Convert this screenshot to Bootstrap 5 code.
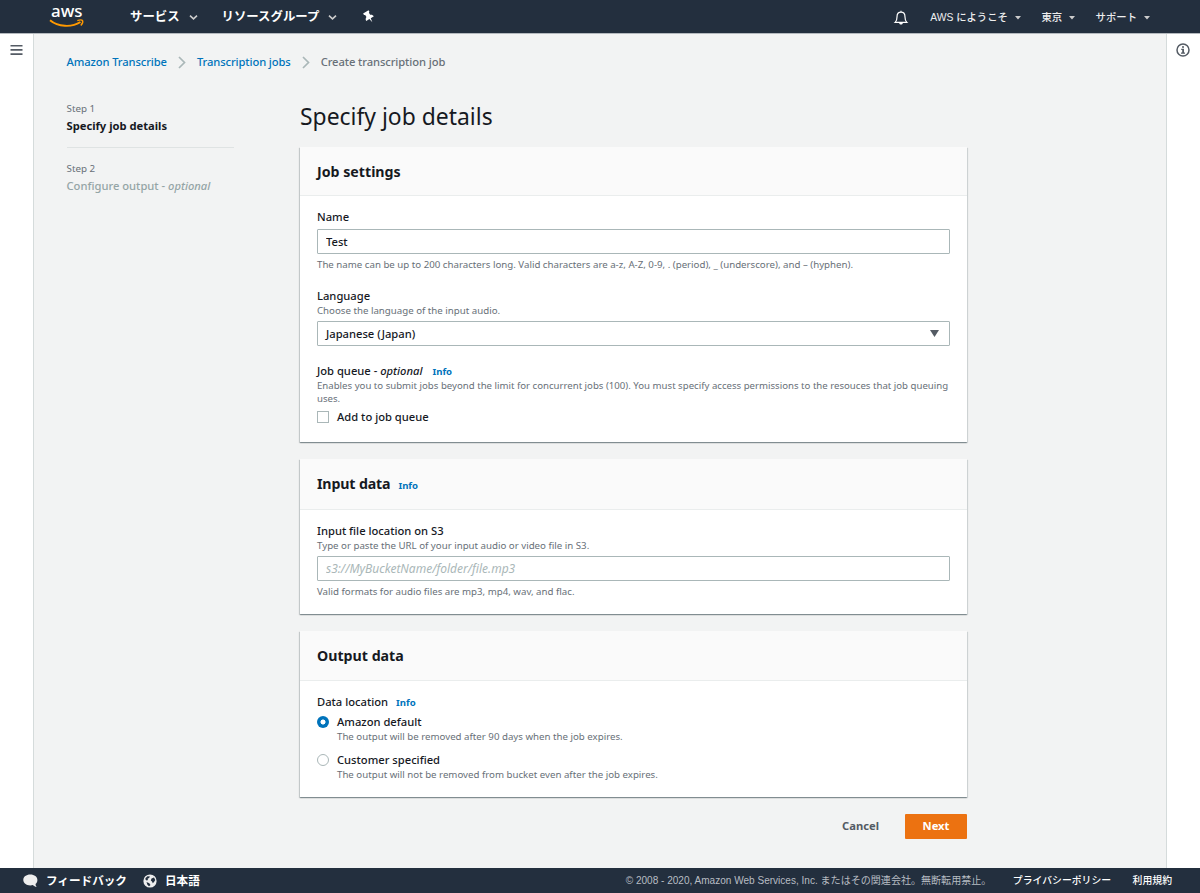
<!DOCTYPE html>
<html lang="ja">
<head>
<meta charset="utf-8">
<title>Amazon Transcribe</title>
<meta name="viewport" content="width=device-width, initial-scale=1">
<link href="https://cdn.jsdelivr.net/npm/bootstrap@5.3.0/dist/css/bootstrap.min.css" rel="stylesheet">
<style>
body{font-family:"Noto Sans","Noto Sans CJK JP",sans-serif;font-size:11.2px;font-weight:500;line-height:16px;color:#16191f;background:#f2f3f3;height:893px;overflow:hidden}
a{text-decoration:none;color:#0073bb}
svg{display:block;flex:none;overflow:visible}
.topbar{height:34px;flex:none;background:#232f3e;border-bottom:1px solid #b4b9be;font-family:"Liberation Sans","Noto Sans CJK JP",sans-serif;padding:1px 0 0 49px}
.topbar a,.footbar a{color:#fff}
.menu-main{font-size:12.4px;font-weight:700}
.menu-main a:first-child{margin-left:45px}
.menu-side{font-size:10.35px;padding-top:1px}
.menu-side a,.topbar .menu-side a{color:#eee}
.drop{margin:0 20.5px 0 7px}
.drop:last-child{margin-right:50px}
.rail{width:34px;flex:none;background:#fff}
.rail-start{border-right:1px solid #d5dbdb}
.rail-end{border-left:1px solid #d5dbdb}
.crumbs{height:16px;margin:20px 0 0 32.5px;color:#687078}
.crumbs a,.crumbs span{letter-spacing:-.1px}
.crumbs span{letter-spacing:-.09px}
.crumbs svg{margin:0 11px}
.steps{width:167px;margin:31px 0 0 32.5px}
.step-no{font-size:9.8px;font-weight:400;color:#687078}
.step-name{padding-top:1px}
.step-line{height:1px;background:#dfe3e3;margin:13px 0 13px}
.pending{color:#95a5a6}
.form-col{width:667px;margin-left:66.5px}
h1{font-size:22.9px;line-height:30px;margin:32px 0 15px;font-weight:400}
.panel{background:#fff;box-shadow:0 1px 1px 0 rgba(0,28,36,.3),1px 1px 1px 0 rgba(0,28,36,.1),-1px 1px 1px 0 rgba(0,28,36,.15);margin-bottom:17px}
.panel-head{background:#fafafa;border-bottom:1px solid #eaeded;padding:1px 17px 0;height:49px}
.head-input{height:51px}
.head-output{height:50px}
.panel-head h2{font-size:14.2px;font-weight:700;margin:0;line-height:20px}
.head-input h2{letter-spacing:-.15px}
.head-input .info{padding-top:3px}
.panel-body{padding:13px 17px 16px}
.panel-first .panel-body{padding-bottom:16.5px}
.panel-last .panel-body{padding-bottom:16px}
.group{margin-top:17px}
.hint{font-size:9.7px;font-weight:400;line-height:13px;color:#687078}
.hint-queue{line-height:12.5px;font-size:9.65px;white-space:nowrap}
.info{font-size:9.6px;font-weight:700;margin-left:8px}
.info-queue{margin-left:10px}
.field{display:block;width:100%;height:25px;border:1px solid #aab7b8;border-radius:1px;padding:0 8px;font:inherit;line-height:23px;color:#16191f;background:#fff;outline:0}
.field::placeholder{color:#aab7b8;font-style:italic;font-size:12px;font-weight:400;opacity:1}
.tick{width:12px;height:12px;border:1px solid #aab7b8;flex:none;background:#fff}
.dot-off{border-radius:50%}
.dot-on{border:0;border-radius:50%;background:radial-gradient(circle,#fff 0 2.1px,#0073bb 2.900px)}
.choice{gap:8px;height:16px}
.choice-first{margin-top:3px}
.choice-next{margin-top:9px}
.sub{margin-left:20px}
.cancel{color:#545b64;margin-right:26px}
.cta{background:#ec7211;color:#fff;font-weight:700;width:62px;height:25px;border-radius:1px}
.cta:hover{color:#fff}
.footbar{height:25px;flex:none;background:#232f3e;padding:0 28px 0 23px;font-family:"Liberation Sans","Noto Sans CJK JP",sans-serif}
.foot-start{font-size:11.6px;font-weight:700}
.foot-end{font-size:9.85px;gap:21.5px}
.copy{color:#b8bdc3;font-size:10.05px;font-weight:400}
</style>
</head>
<body class="d-flex flex-column">
<header class="topbar d-flex align-items-center">
  <svg width="36" height="24" viewBox="0 0 36 24"><text x="2" y="12.200" font-family="Noto Sans" font-size="16" font-weight="500" fill="#fff" textLength="31.500" lengthAdjust="spacingAndGlyphs">aws</text><path d="M1 15.200C9 21.900 22.500 22.800 31.500 17" fill="none" stroke="#f90" stroke-width="1.900"/><path d="M28.300 15.700c2-.8 4.500-1 5.200-.2.500 1-.2 3.400-1.700 5" fill="none" stroke="#f90" stroke-width="1.400"/></svg>
  <nav class="menu-main d-flex align-items-center">
    <a href="#">サービス</a>
    <svg style="margin:0 24px 0 9px" width="9" height="7" viewBox="0 0 9 7"><path d="M1 1.700 4.500 4.900 8 1.700" fill="none" stroke="#ccc" stroke-width="1.600"/></svg>
    <a href="#">リソースグループ</a>
    <svg style="margin-left:9px" width="9" height="7" viewBox="0 0 9 7"><path d="M1 1.700 4.500 4.900 8 1.700" fill="none" stroke="#ccc" stroke-width="1.600"/></svg>
    <svg style="margin-left:26px" width="12" height="12" viewBox="0 0 12 12"><path transform="rotate(-32 6 6)" d="M2.800 0H9.200V1.700L8.200 2.300V4.700C9.700 5.400 10.500 6.400 10.500 8H6.800L6 12.300 5.200 8H1.500C1.500 6.400 2.300 5.400 3.800 4.700V2.300L2.800 1.700Z" fill="#fff"/></svg>
  </nav>
  <nav class="menu-side d-flex align-items-center ms-auto">
    <svg width="14" height="16" viewBox="0 0 14 16"><path d="M1.200 12.400C3 10.800 3 9.300 3 7c0-3 1.500-4.800 4-4.800S11 4 11 7c0 2.300 0 3.800 1.800 5.400ZM7 2.200V.8" fill="none" stroke="#fff" stroke-width="1.200"/><path d="M5.200 13h3.600c-.2 2-3.400 2-3.600 0Z" fill="#fff"/></svg>
    <a href="#" style="margin-left:22px">AWS にようこそ</a>
    <svg class="drop" width="6" height="4"><path d="M0 0H6L3 3.500Z" fill="#ccc"/></svg>
    <a href="#">東京</a>
    <svg class="drop" width="6" height="4"><path d="M0 0H6L3 3.500Z" fill="#ccc"/></svg>
    <a href="#">サポート</a>
    <svg class="drop" width="6" height="4"><path d="M0 0H6L3 3.500Z" fill="#ccc"/></svg>
  </nav>
</header>
<div class="d-flex flex-grow-1">
  <aside class="rail rail-start"><svg style="margin:10px 0 0 10px" width="13" height="12" viewBox="0 0 13 12"><path d="M.5 1.700H12.500M.5 5.900H12.500M.5 10.100H12.500" stroke="#545b64" stroke-width="1.600"/></svg></aside>
  <main class="flex-grow-1">
    <nav class="crumbs d-flex align-items-center">
      <a href="#">Amazon Transcribe</a>
      <svg width="8" height="13" viewBox="0 0 8 13"><path d="M1 1 6.500 6.500 1 12" fill="none" stroke="#aab7b8" stroke-width="1.700"/></svg>
      <a href="#">Transcription jobs</a>
      <svg width="8" height="13" viewBox="0 0 8 13"><path d="M1 1 6.500 6.500 1 12" fill="none" stroke="#aab7b8" stroke-width="1.700"/></svg>
      <span>Create transcription job</span>
    </nav>
    <div class="d-flex align-items-start">
      <aside class="steps">
        <div class="step-no">Step 1</div>
        <div class="step-name fw-bold">Specify job details</div>
        <div class="step-line"></div>
        <div class="step-no">Step 2</div>
        <div class="step-name pending">Configure output - <i>optional</i></div>
      </aside>
      <section class="form-col">
        <h1>Specify job details</h1>
        <div class="panel panel-first">
          <div class="panel-head d-flex align-items-center"><h2>Job settings</h2></div>
          <div class="panel-body">
            <label class="d-block" for="jobName">Name</label>
            <input id="jobName" class="field mt-1" value="Test">
            <div class="hint mt-1">The name can be up to 200 characters long. Valid characters are a-z, A-Z, 0-9, . (period), _ (underscore), and – (hyphen).</div>
            <div class="group">Language</div>
            <div class="hint">Choose the language of the input audio.</div>
            <div class="field mt-1 d-flex align-items-center justify-content-between"><span>Japanese (Japan)</span><svg style="margin-right:2px" width="9" height="7"><path d="M0 0H9L4.500 7Z" fill="#545b64"/></svg></div>
            <div class="group">Job queue - <i>optional</i><a class="info info-queue" href="#">Info</a></div>
            <div class="hint hint-queue">Enables you to submit jobs beyond the limit for concurrent jobs (100). You must specify access permissions to the resouces that job queuing<br>uses.</div>
            <div class="choice d-flex align-items-center mt-1"><span class="tick"></span><span>Add to job queue</span></div>
          </div>
        </div>
        <div class="panel">
          <div class="panel-head head-input d-flex align-items-center"><h2>Input data</h2><a class="info" href="#">Info</a></div>
          <div class="panel-body">
            <label class="d-block" for="s3">Input file location on S3</label>
            <div class="hint">Type or paste the URL of your input audio or video file in S3.</div>
            <input id="s3" class="field mt-1" placeholder="s3://MyBucketName/folder/file.mp3">
            <div class="hint mt-1">Valid formats for audio files are mp3, mp4, wav, and flac.</div>
          </div>
        </div>
        <div class="panel panel-last">
          <div class="panel-head head-output d-flex align-items-center"><h2>Output data</h2></div>
          <div class="panel-body">
            <div>Data location<a class="info" href="#">Info</a></div>
            <div class="choice choice-first d-flex align-items-center"><span class="tick dot-on"></span><span>Amazon default</span></div>
            <div class="hint sub">The output will be removed after 90 days when the job expires.</div>
            <div class="choice choice-next d-flex align-items-center"><span class="tick dot-off"></span><span>Customer specified</span></div>
            <div class="hint sub">The output will not be removed from bucket even after the job expires.</div>
          </div>
        </div>
        <div class="d-flex justify-content-end align-items-center">
          <a class="cancel fw-bold" href="#">Cancel</a>
          <a class="cta d-flex align-items-center justify-content-center" href="#">Next</a>
        </div>
      </section>
    </div>
  </main>
  <aside class="rail rail-end"><svg style="margin:9px 0 0 9px" width="14" height="14" viewBox="0 0 14 14"><circle cx="7" cy="7" r="6" fill="none" stroke="#545b64" stroke-width="1.500"/><path d="M6 3.200h2v1.600H6ZM5.200 5.800H8v3.700h1v1.200H5V9.500h1.200V7h-1Z" fill="#545b64"/></svg></aside>
</div>
<footer class="footbar d-flex align-items-center">
  <div class="foot-start d-flex align-items-center">
    <svg width="15" height="14" viewBox="0 0 15 14"><path d="M7.300.6C3.200.6.300 3 .3 6s2.900 5.400 7 5.400c1 0 1.800-.1 2.600-.4 1 1.200 2.300 1.800 3.700 1.900-.7-.9-1.100-1.800-1.100-3C13.800 9 14.400 7.600 14.400 6c0-3-3-5.400-7.100-5.400Z" fill="#eee"/></svg>
    <a class="ms-2" href="#">フィードバック</a>
    <svg style="margin-left:16px" width="14" height="14" viewBox="0 0 14 14"><circle cx="7" cy="7" r="6.600" fill="#eee"/><path d="M2.400 4.200 4.500 2.200 7 2.600 6 4 4.600 4.800 5 6 3.800 6.400 2.600 5.800ZM8.500 4.500 11 3.600 12.300 6 11 8 9.800 9.200 9 7.500 7.800 6.400ZM3.500 8 6.300 9.200 7.500 11 6 12.300 4.400 10.800Z" fill="#232f3e"/></svg>
    <a class="ms-2" href="#">日本語</a>
  </div>
  <div class="foot-end d-flex align-items-center ms-auto">
    <span class="copy">© 2008 - 2020, Amazon Web Services, Inc. またはその関連会社。無断転用禁止。</span>
    <a href="#">プライバシーポリシー</a>
    <a href="#">利用規約</a>
  </div>
</footer>
<script src="https://cdn.jsdelivr.net/npm/bootstrap@5.3.0/dist/js/bootstrap.bundle.min.js"></script>
</body>
</html>
